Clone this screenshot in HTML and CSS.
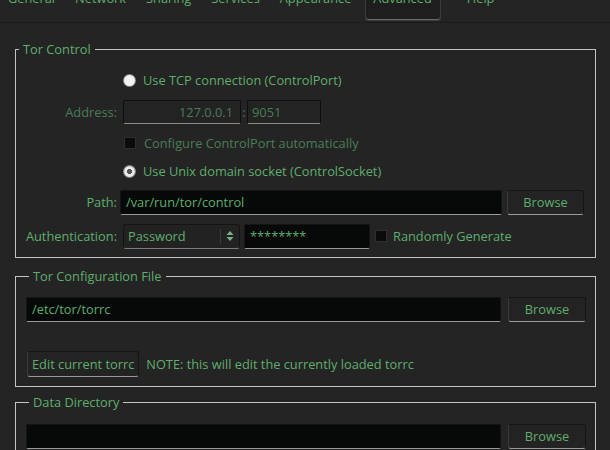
FILE: index.html
```html
<!DOCTYPE html>
<html>
<head>
<meta charset="utf-8">
<link rel="stylesheet" href="styles.css">
</head>
<body>
<div class="tabbar">
  <div class="tab t-general">General</div>
  <div class="tab">Network</div>
  <div class="tab">Sharing</div>
  <div class="tab">Services</div>
  <div class="tab">Appearance</div>
  <div class="tab active">Advanced</div>
  <div class="tab t-help">Help</div>
</div>
<div class="page">
  <fieldset class="group g1">
    <legend>Tor Control</legend>
    <div class="ctl-grid">
      <div></div>
      <div class="opt"><span class="radio"></span><span>Use TCP connection (ControlPort)</span></div>

      <div class="lbl dis">Address:</div>
      <div class="row">
        <div class="field off host">127.0.0.1</div>
        <span class="colon">:</span>
        <div class="field off port">9051</div>
      </div>

      <div></div>
      <div class="opt dis"><span class="check"></span><span>Configure ControlPort automatically</span></div>

      <div></div>
      <div class="opt"><span class="radio on"></span><span>Use Unix domain socket (ControlSocket)</span></div>

      <div class="lbl">Path:</div>
      <div class="row path">
        <div class="field grow">/var/run/tor/control</div>
        <div class="btn b1">Browse</div>
      </div>

      <div class="lbl">Authentication:</div>
      <div class="row">
        <div class="combo"><span class="combo-text">Password</span><span class="combo-arrow"><svg width="8" height="12" viewBox="0 0 8 12"><path d="M4 1 L7.5 5 L0.5 5 Z M4 11 L7.5 7 L0.5 7 Z" fill="#7fae89"/></svg></span></div>
        <div class="field pass">********</div>
        <span class="check"></span>
        <span class="rg">Randomly Generate</span>
      </div>
    </div>
  </fieldset>

  <fieldset class="group g2">
    <legend>Tor Configuration File</legend>
    <div class="row file">
      <div class="field grow">/etc/tor/torrc</div>
      <div class="btn">Browse</div>
    </div>
    <div class="row edit">
      <div class="btn edit-btn">Edit current torrc</div>
      <span>NOTE: this will edit the currently loaded torrc</span>
    </div>
  </fieldset>

  <fieldset class="group g3">
    <legend>Data Directory</legend>
    <div class="row file">
      <div class="field grow"></div>
      <div class="btn">Browse</div>
    </div>
  </fieldset>
</div>
</body>
</html>
```

FILE: styles.css
```css
html, body {
  margin: 0;
  padding: 0;
  background: #242424;
  height: 450px;
  overflow: hidden;
}
body {
  font-family: "Open Sans", "Noto Sans", sans-serif;
  font-size: 12.8px;
  line-height: 16px;
  color: #5fae6d;
}
.tabbar {
  display: flex;
  height: 22px;
  border-bottom: 1px solid #1b1b1b;
  overflow: hidden;
}
.tab {
  margin-top: -10px;
  padding: 0 10px;
  height: 30px;
  box-sizing: border-box;
  line-height: 16px;
}
.t-general { margin-left: -2px; }
.tab.active {
  background: #1e1e1e;
  border: 1px solid #3a3a3a;
  border-top: none;
  border-radius: 0 0 3px 3px;
  height: 31px;
  padding: 0 8px 0 7px;
  margin-left: 4px;
  box-shadow: inset 0 -1px 0 #6a6a6a;
}
.t-help { margin-left: 16px; }
.page {
  padding: 18px 14px 0 15px;
}
.group {
  margin: 0;
  padding: 0;
  border: 1px solid #c4c4c4;
  min-width: 0;
}
legend {
  margin-left: 3px;
  padding: 0 4px;
  line-height: 16px;
}
.g2 { margin-top: 10px; padding: 13px 9px 9px 10px; }
.g3 { margin-top: 7px; padding: 14px 9px 0 10px; height: 60px; }
.ctl-grid {
  display: grid;
  grid-template-columns: 101px 1fr;
  grid-template-rows: 32px 32px 30px 26px 36px 32px;
  column-gap: 6px;
  align-items: center;
  padding: 7px 11px 5px 0;
}
.lbl { text-align: right; }
.dis { color: #4b7c57; }
.opt { display: flex; align-items: center; gap: 8px; margin-left: 1px; }
.row { display: flex; align-items: center; }
.radio {
  width: 11px;
  height: 11px;
  border-radius: 50%;
  background: #f2f2f2;
  box-shadow: 0 0 0 1px #8a8a8a;
  box-sizing: border-box;
  flex: none;
}
.radio.on {
  background: radial-gradient(circle, #555 0 2.3px, #e8e8e8 2.8px);
}
.check {
  width: 12px;
  height: 12px;
  background: #0b0b0b;
  border: 1px solid #2e2e2e;
  box-sizing: border-box;
  flex: none;
}
.field {
  height: 25px;
  box-sizing: border-box;
  background: #060908;
  border: 1px solid #141414;
  border-bottom-color: #9a9a9a;
  border-radius: 2px;
  padding: 0 5px;
  line-height: 23px;
  white-space: nowrap;
  overflow: hidden;
}
.field.off {
  background: #232323;
  border-color: #0e0e0e;
  border-bottom-color: #8a8a8a;
  color: #4b7c57;
  height: 24px;
  line-height: 22px;
}
.host { width: 118px; text-align: right; padding-right: 7px; }
.colon { width: 6px; text-align: center; color: #4b7c57; }
.port { width: 74px; padding-left: 4px; }
.grow { flex: 1; min-width: 0; }
.path { margin-left: -3px; gap: 5px; }
.btn {
  height: 25px;
  box-sizing: border-box;
  border: 1px solid #151515;
  border-bottom-color: #9a9a9a;
  border-left-color: #3a3a3a;
  border-radius: 3px;
  background: #232323;
  text-align: center;
  line-height: 23px;
  width: 78px;
  flex: none;
}
.b1 { width: 77px; }
.combo {
  width: 117px;
  height: 25px;
  box-sizing: border-box;
  border: 1px solid #141414;
  border-bottom-color: #7a7a7a;
  border-radius: 3px;
  background: #222;
  display: flex;
  align-items: center;
  padding-left: 4px;
  flex: none;
}
.combo-text { flex: 1; }
.combo-arrow {
  width: 18px;
  height: 15px;
  border-left: 1px solid #3a3a3a;
  display: flex;
  align-items: center;
  justify-content: center;
}
.pass { width: 126px; margin-left: 4px; padding-left: 5px; flex: none; }
.row .check { margin-left: 5px; }
.rg { margin-left: 6px; }
.file { gap: 7px; }
.edit { margin-top: 29px; gap: 7px; }
.edit-btn { width: auto; height: 26px; padding: 0 4px; line-height: 24px; margin-left: 1px; }
```
